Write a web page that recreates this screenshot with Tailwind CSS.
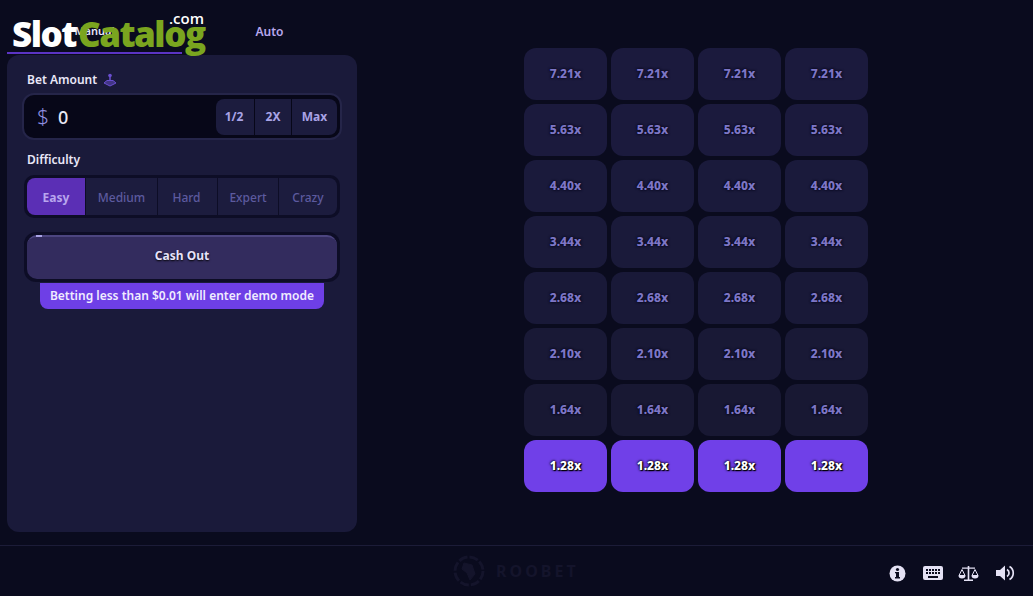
<!DOCTYPE html>
<html lang="en">
<head>
    <meta charset="UTF-8">
    <meta name="viewport" content="width=device-width, initial-scale=1.0">
    <title>Roobet Towers</title>
    <script src="https://cdn.jsdelivr.net/npm/@tailwindcss/browser@4"></script>
</head>
<body class="bg-[#0a0b1e] font-['Noto_Sans',sans-serif] h-[596px] w-[1033px] overflow-hidden relative">
    <!-- watermark over the tabs -->
    <div class="absolute left-[12px] top-[10px] z-10 font-['Open_Sans',sans-serif] font-extrabold text-[35px] leading-[48px] tracking-[-1.5px] whitespace-nowrap">
        <span class="text-white">Slot</span><span class="text-[#7aa51f] ml-[2px]">Catalog</span>
    </div>
    <div class="absolute left-[169px] top-[7px] z-10 font-['Open_Sans',sans-serif] font-semibold text-[15px] leading-[22px] text-white">.com</div>

    <main class="flex h-[545px]">
        <!-- left column -->
        <section class="w-[350px] ml-[7px] shrink-0">
            <div class="flex h-[55px]">
                <div class="w-[175px] h-[54px] border-b-2 border-[#5b34c4] flex items-end justify-center pb-[13px] text-[11px] font-semibold text-[#e8e6fa]">Manual</div>
                <div class="w-[175px] h-[54px] flex items-end justify-center pb-[13px] text-[12px] font-semibold text-[#b7a8ee]">Auto</div>
            </div>
            <div class="bg-[#1a1a3a] rounded-[12px] h-[477px] pt-[16px] px-[15px]">
                <div class="flex items-center gap-[6px] pl-[5px] h-[18px] text-[12px] font-semibold text-[#e9e7f8]">
                    Bet Amount
                    <svg width="14" height="14" viewBox="0 0 14 14" fill="none" stroke="#6a4fd0"><path d="M7 3v5" stroke-width="1.500"/><circle cx="7" cy="2.500" r="1.800" fill="#6a4fd0" stroke="none"/><path d="M4 7.500h6l3 2.500-6 3-6-3z" fill="#6a4fd0" fill-opacity="0.500"/></svg>
                </div>
                <div class="mt-[4px] h-[47px] rounded-[12px] bg-[#070718] border-2 border-[#252549] flex items-center pl-[13px] pr-[3px]">
                    <span class="text-[21px] font-light text-[#8f8fe0] w-[21px]">$</span>
                    <span class="text-[18px] font-medium text-[#e8e8f5] flex-1 pt-[1px]">0</span>
                    <div class="flex h-[36px] gap-[1px] text-[12px] font-bold text-[#a9a3e6]">
                        <div class="w-[38px] bg-[#1c1c3e] rounded-l-[8px] flex items-center justify-center pt-[1px] pr-[2px]">1/2</div>
                        <div class="w-[36px] bg-[#1c1c3e] flex items-center justify-center pt-[1px]">2X</div>
                        <div class="w-[45px] bg-[#1c1c3e] rounded-r-[8px] flex items-center justify-center pt-[1px]">Max</div>
                    </div>
                </div>

                <div class="pl-[5px] mt-[11px] h-[18px] flex items-center text-[12px] font-semibold text-[#e9e7f8]">Difficulty</div>
                <div class="mt-[6px] ml-[2px] w-[316px] h-[43px] rounded-[10px] bg-[#0d0d26] p-[3px] flex items-stretch gap-[1px] text-[12px] font-medium text-[#5c5a9f]">
                    <div class="w-[58px] bg-[#5b2fb5] rounded-l-[8px] flex items-center justify-center pt-[2px] font-bold text-[#b8a6ee]">Easy</div>
                    <div class="w-[71px] bg-[#1c1c3e] flex items-center justify-center pt-[2px]">Medium</div>
                    <div class="w-[59px] bg-[#1c1c3e] flex items-center justify-center pt-[2px] pr-[2px]">Hard</div>
                    <div class="w-[60px] bg-[#1c1c3e] flex items-center justify-center pt-[2px]">Expert</div>
                    <div class="flex-1 bg-[#1c1c3e] rounded-r-[8px] flex items-center justify-center pt-[2px]">Crazy</div>
                </div>
                <div class="mt-[14px] ml-[2px] w-[316px] h-[50px] rounded-[12px] bg-[#0d0d26] p-[3px]">
                    <div class="relative h-full rounded-[10px] bg-[#332c5e] border-t-2 border-[#4c4580] flex items-center justify-center pb-[4px] text-[12px] font-bold text-[#e6e2fb] [text-shadow:0_1px_2px_#000]">
                        <span class="absolute left-[9px] top-[-2px] w-[6px] h-[2px] bg-[#a9a3e6]"></span>
                        Cash Out
                    </div>
                </div>
                <div class="mt-[1px] ml-[18px] w-[284px] h-[26px] rounded-b-[8px] bg-[#6e3fe6] flex items-center justify-center text-[12px] font-semibold text-[#f0ecff]">Betting less than $0.01 will enter demo mode</div>
            </div>
        </section>

        <!-- multiplier grid -->
        <section class="ml-[167px] mt-[48px] grid grid-cols-[repeat(4,83px)] auto-rows-[52px] gap-x-[4px] gap-y-[4px] h-fit text-[12px] font-extrabold text-[#7d76c6] [text-shadow:0_0_2px_#06061a,0_0_3px_#06061a]">
            <div class="rounded-[12px] bg-[#1b1a3d] flex items-center justify-center">7.21x</div>
            <div class="rounded-[12px] bg-[#1b1a3d] flex items-center justify-center">7.21x</div>
            <div class="rounded-[12px] bg-[#1b1a3d] flex items-center justify-center">7.21x</div>
            <div class="rounded-[12px] bg-[#1b1a3d] flex items-center justify-center">7.21x</div>
            <div class="rounded-[12px] bg-[#1b1a3d] flex items-center justify-center">5.63x</div>
            <div class="rounded-[12px] bg-[#1b1a3d] flex items-center justify-center">5.63x</div>
            <div class="rounded-[12px] bg-[#1b1a3d] flex items-center justify-center">5.63x</div>
            <div class="rounded-[12px] bg-[#1b1a3d] flex items-center justify-center">5.63x</div>
            <div class="rounded-[12px] bg-[#1a1a3b] flex items-center justify-center">4.40x</div>
            <div class="rounded-[12px] bg-[#1a1a3b] flex items-center justify-center">4.40x</div>
            <div class="rounded-[12px] bg-[#1a1a3b] flex items-center justify-center">4.40x</div>
            <div class="rounded-[12px] bg-[#1a1a3b] flex items-center justify-center">4.40x</div>
            <div class="rounded-[12px] bg-[#1a1a3a] flex items-center justify-center">3.44x</div>
            <div class="rounded-[12px] bg-[#1a1a3a] flex items-center justify-center">3.44x</div>
            <div class="rounded-[12px] bg-[#1a1a3a] flex items-center justify-center">3.44x</div>
            <div class="rounded-[12px] bg-[#1a1a3a] flex items-center justify-center">3.44x</div>
            <div class="rounded-[12px] bg-[#191938] flex items-center justify-center">2.68x</div>
            <div class="rounded-[12px] bg-[#191938] flex items-center justify-center">2.68x</div>
            <div class="rounded-[12px] bg-[#191938] flex items-center justify-center">2.68x</div>
            <div class="rounded-[12px] bg-[#191938] flex items-center justify-center">2.68x</div>
            <div class="rounded-[12px] bg-[#191936] flex items-center justify-center">2.10x</div>
            <div class="rounded-[12px] bg-[#191936] flex items-center justify-center">2.10x</div>
            <div class="rounded-[12px] bg-[#191936] flex items-center justify-center">2.10x</div>
            <div class="rounded-[12px] bg-[#191936] flex items-center justify-center">2.10x</div>
            <div class="rounded-[12px] bg-[#181833] flex items-center justify-center">1.64x</div>
            <div class="rounded-[12px] bg-[#181833] flex items-center justify-center">1.64x</div>
            <div class="rounded-[12px] bg-[#181833] flex items-center justify-center">1.64x</div>
            <div class="rounded-[12px] bg-[#181833] flex items-center justify-center">1.64x</div>
            <div class="rounded-[12px] bg-[#7040e8] flex items-center justify-center text-white [text-shadow:0_0_2px_#000,0_0_3px_#000,1px_1px_1px_#000]">1.28x</div>
            <div class="rounded-[12px] bg-[#7040e8] flex items-center justify-center text-white [text-shadow:0_0_2px_#000,0_0_3px_#000,1px_1px_1px_#000]">1.28x</div>
            <div class="rounded-[12px] bg-[#7040e8] flex items-center justify-center text-white [text-shadow:0_0_2px_#000,0_0_3px_#000,1px_1px_1px_#000]">1.28x</div>
            <div class="rounded-[12px] bg-[#7040e8] flex items-center justify-center text-white [text-shadow:0_0_2px_#000,0_0_3px_#000,1px_1px_1px_#000]">1.28x</div>
        </section>
    </main>

    <footer class="h-[51px] border-t border-[#1c1c38] flex items-center relative">
        <!-- faded brand -->
        <div class="ml-[452px] flex items-center gap-[10px] text-[#14142b]">
            <svg width="34" height="34" viewBox="0 0 34 34" fill="none" stroke="#14142b"><circle cx="17" cy="17" r="14" stroke-width="3" stroke-dasharray="9 2"/><path d="M12 9l8 2 3 9-5 6-3-7-5-4z" fill="#14142b"/></svg>
            <span class="text-[16px] font-bold tracking-[3px]">ROOBET</span>
        </div>
        <div class="ml-auto mr-[18px] pt-[4px] flex items-center">
            <svg width="17" height="17" viewBox="0 0 17 17"><circle cx="8.500" cy="8.500" r="8" fill="#e4e1f4"/><rect x="7" y="7" width="3" height="6" fill="#0a0b1e"/><rect x="6" y="12" width="5" height="1.500" fill="#0a0b1e"/><rect x="6" y="7" width="2" height="1.300" fill="#0a0b1e"/><circle cx="8.500" cy="4.500" r="1.600" fill="#0a0b1e"/></svg>
            <svg class="ml-[17px]" width="20" height="14" viewBox="0 0 20 14"><rect width="20" height="14" rx="2" fill="#e4e1f4"/><path d="M3 3h2v2H3zM6 3h2v2H6zM9 3h2v2H9zM12 3h2v2h-2zM15 3h2v2h-2zM3 6h2v2H3zM6 6h2v2H6zM9 6h2v2H9zM12 6h2v2h-2zM15 6h2v2h-2zM5 10h10v2H5z" fill="#0a0b1e"/></svg>
            <svg class="ml-[15px]" width="21" height="17" viewBox="0 0 21 17"><path d="M9.700 1h1.600v1.500H17v1.200h-5.700V14.500h3.700V16H6v-1.500h3.700V3.700H4V2.500h5.700z" fill="#e4e1f4"/><path d="M4 4.500L1 10.500h6zM17 4.500L14 10.500h6z" fill="none" stroke="#e4e1f4"/><path d="M0.500 10.500h7a3.500 3 0 0 1-7 0zM13.500 10.500h7a3.500 3 0 0 1-7 0z" fill="#e4e1f4"/></svg>
            <svg class="ml-[17px]" width="19" height="16" viewBox="0 0 19 16"><path d="M0 5h4l5-4.500v15L4 11H0z" fill="#e4e1f4"/><path d="M11 4.500a4 4 0 0 1 0 7" fill="none" stroke="#e4e1f4" stroke-width="1.700"/><path d="M13.500 1.500a7.500 7.500 0 0 1 0 13" fill="none" stroke="#e4e1f4" stroke-width="1.700"/></svg>
        </div>
    </footer>
</body>
</html>
